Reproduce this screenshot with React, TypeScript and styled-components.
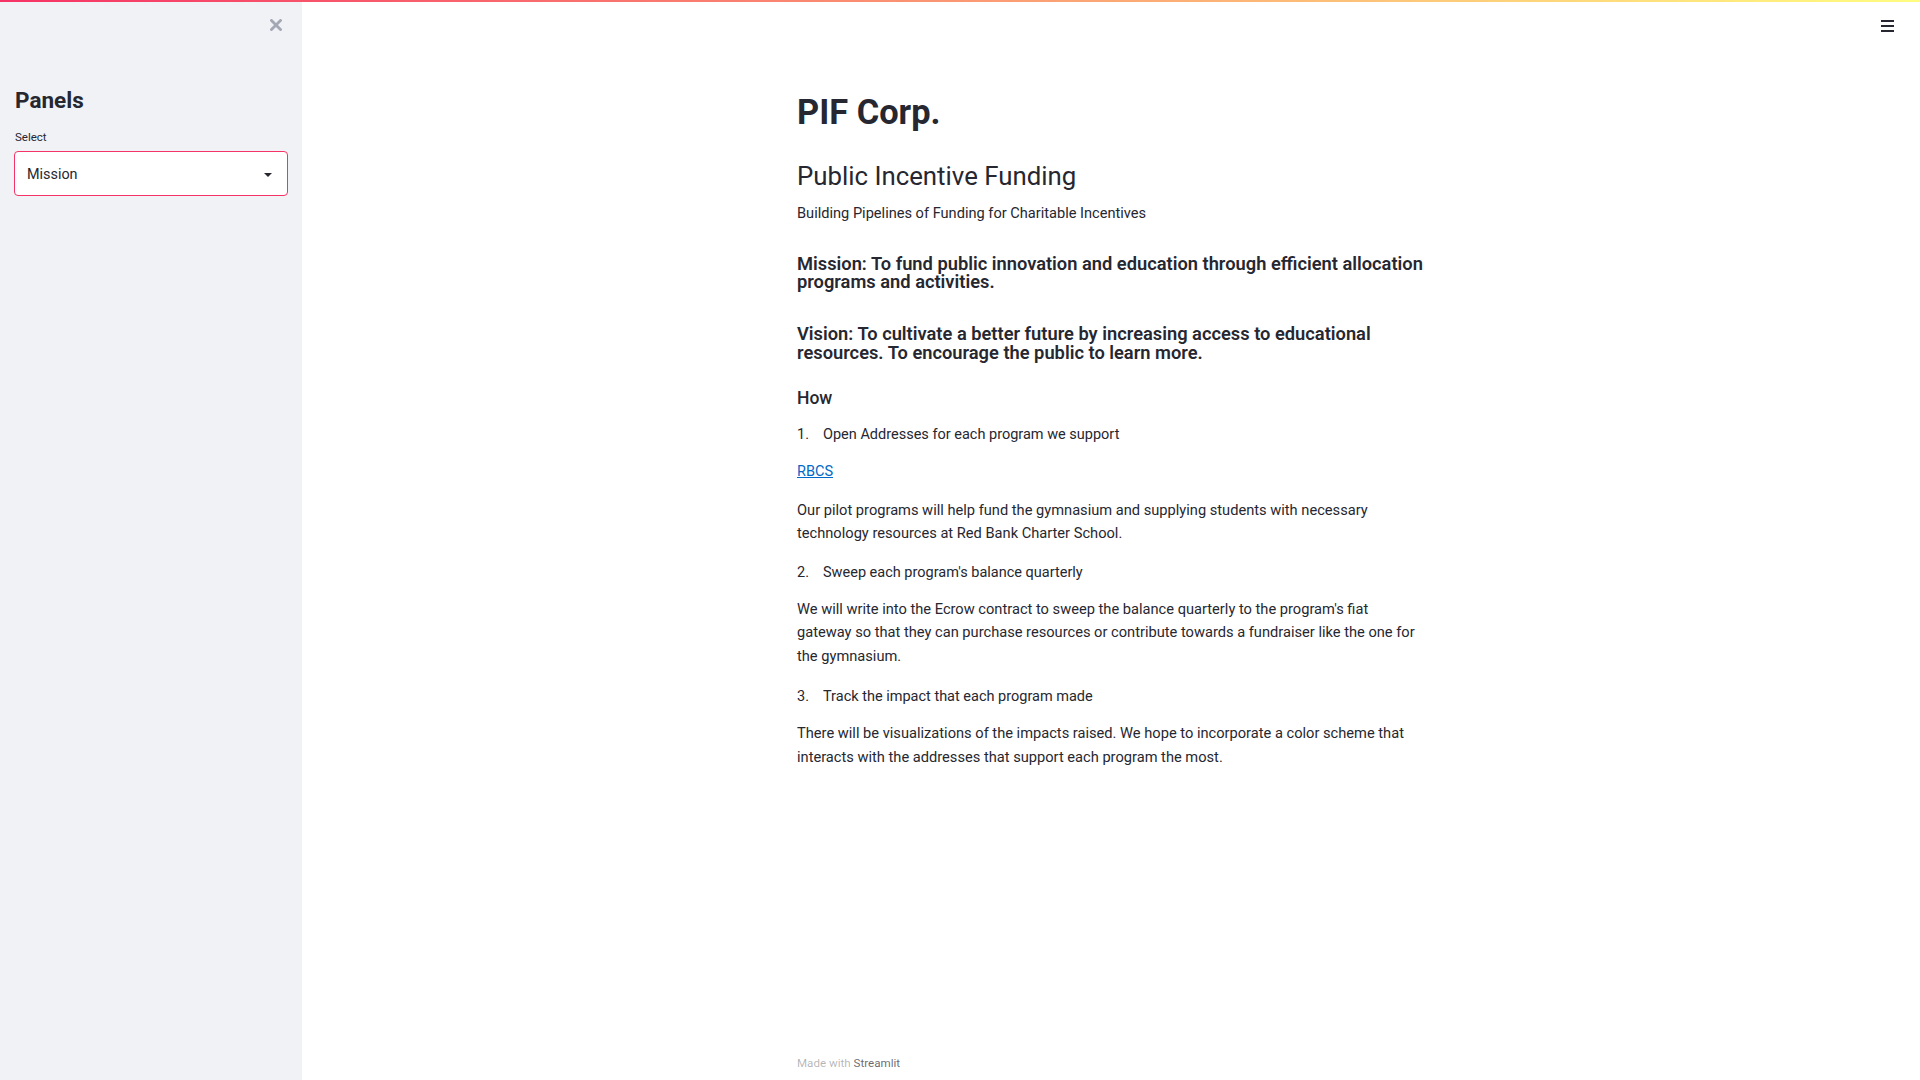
import React from "react";
import styled, { createGlobalStyle } from "styled-components";

const GlobalStyle = createGlobalStyle`
  html, body { margin: 0; padding: 0; background: #ffffff; }
  body {
    font-family: Roboto, "Liberation Sans", sans-serif;
    color: #262730;
    -webkit-font-smoothing: antialiased;
  }
  * { box-sizing: border-box; }
`;

const Page = styled.div`
  display: flex;
  flex-direction: column;
  width: 1920px;
  height: 1080px;
  overflow: hidden;
`;

const Decoration = styled.div`
  height: 2px;
  flex: none;
  background: linear-gradient(90deg, rgb(246, 51, 102), rgb(255, 253, 128));
`;

const Body = styled.div`
  display: flex;
  flex: 1;
  min-height: 0;
`;

const Sidebar = styled.aside`
  width: 302px;
  flex: none;
  background: #f0f2f6;
  padding: 0 14px;
  display: flex;
  flex-direction: column;
`;

const CloseRow = styled.div`
  height: 46px;
  display: flex;
  align-items: center;
  justify-content: flex-end;
  padding-right: 6px;
`;

const CloseButton = styled.button`
  border: none;
  background: transparent;
  padding: 0;
  width: 12px;
  height: 12px;
  display: flex;
  cursor: pointer;
`;

const SidebarTitle = styled.h2`
  margin: 37px 0 0 1px;
  font-size: 22.5px;
  line-height: 30px;
  font-weight: 700;
  color: #262730;
`;

const Label = styled.label`
  display: block;
  margin: 14px 0 0 1px;
  font-size: 11.5px;
  line-height: 16px;
  color: #262730;
`;

const SelectBox = styled.div`
  margin-top: 6px;
  height: 45px;
  background: #ffffff;
  border: 1px solid #f63366;
  border-radius: 4px;
  display: flex;
  align-items: center;
  justify-content: space-between;
  padding: 2px 15px 0 12px;
  font-size: 14.4px;
  color: #262730;
`;

const Caret = styled.span`
  width: 0;
  height: 0;
  border-left: 4px solid transparent;
  border-right: 4px solid transparent;
  border-top: 4px solid #262730;
  margin-top: 1px;
`;

const Main = styled.main`
  flex: 1;
  display: flex;
  flex-direction: column;
  min-width: 0;
`;

const TopBar = styled.header`
  height: 48px;
  flex: none;
  display: flex;
  align-items: center;
  justify-content: flex-end;
  padding-right: 26px;
`;

const MenuButton = styled.button`
  border: none;
  background: transparent;
  padding: 0;
  width: 13px;
  height: 12px;
  display: flex;
  flex-direction: column;
  justify-content: space-between;
  cursor: pointer;
`;

const MenuLine = styled.span`
  display: block;
  height: 1.6px;
  background: #262730;
`;

const Content = styled.div`
  width: 628px;
  margin: 0 auto;
  padding-top: 42px;
`;

const Title = styled.h1`
  margin: 0;
  font-size: 34.4px;
  line-height: 40px;
  font-weight: 700;
  color: #262730;
`;

const Header = styled.h2`
  margin: 25.5px 0 0;
  font-size: 25.8px;
  line-height: 36px;
  font-weight: 400;
  color: #262730;
`;

const Subtitle = styled.p`
  margin: 8.5px 0 0;
  font-size: 14.6px;
  line-height: 22px;
  color: #262730;
`;

const Statement = styled.h3<{ $gap: number }>`
  margin: ${(p) => p.$gap}px 0 0;
  font-size: 18.3px;
  line-height: 18.5px;
  font-weight: 600;
  color: #262730;
`;

const SubHeading = styled.h4`
  margin: 23.5px 0 0;
  font-size: 17.5px;
  line-height: 24px;
  font-weight: 500;
  color: #262730;
`;

const Step = styled.div<{ $gap: number }>`
  display: flex;
  margin-top: ${(p) => p.$gap}px;
  font-size: 14.5px;
  line-height: 23px;
`;

const StepNum = styled.span`
  width: 26px;
  flex: none;
`;

const LinkLine = styled.p`
  margin: 14.5px 0 0;
  font-size: 14.5px;
  line-height: 23px;
`;

const Link = styled.a`
  color: #0068c9;
  text-decoration: underline;
`;

const Para = styled.p<{ $gap: number }>`
  margin: ${(p) => p.$gap}px 0 0;
  font-size: 14.65px;
  line-height: 23.3px;
  color: #262730;
`;

const Footer = styled.footer`
  width: 628px;
  margin: auto auto 0;
  padding-bottom: 8px;
  font-size: 11.6px;
  line-height: 17px;
  color: rgba(38, 39, 48, 0.35);
`;

const FooterBrand = styled.span`
  color: rgba(38, 39, 48, 0.7);
`;

export default function App() {
  return (
    <Page>
      <GlobalStyle />
      <Decoration />
      <Body>
        <Sidebar>
          <CloseRow>
            <CloseButton aria-label="Close sidebar">
              <svg width="12" height="12" viewBox="0 0 12 12">
                <path d="M1.5 1.5 L10.5 10.5 M10.5 1.5 L1.5 10.5" stroke="#a3a8b4" strokeWidth="2.8" strokeLinecap="square" />
              </svg>
            </CloseButton>
          </CloseRow>
          <SidebarTitle>Panels</SidebarTitle>
          <Label>Select</Label>
          <SelectBox>
            <span>Mission</span>
            <Caret />
          </SelectBox>
        </Sidebar>
        <Main>
          <TopBar>
            <MenuButton aria-label="Menu">
              <MenuLine />
              <MenuLine />
              <MenuLine />
            </MenuButton>
          </TopBar>
          <Content>
            <Title>PIF Corp.</Title>
            <Header>Public Incentive Funding</Header>
            <Subtitle>Building Pipelines of Funding for Charitable Incentives</Subtitle>
            <Statement $gap={30.5}>
              Mission: To fund public innovation and education through efficient allocation programs and activities.
            </Statement>
            <Statement $gap={33.5}>
              Vision: To cultivate a better future by increasing access to educational resources. To encourage the public to learn more.
            </Statement>
            <SubHeading>How</SubHeading>
            <Step $gap={13.2}>
              <StepNum>1.</StepNum>
              <span>Open Addresses for each program we support</span>
            </Step>
            <LinkLine>
              <Link href="#">RBCS</Link>
            </LinkLine>
            <Para $gap={15.4}>
              Our pilot programs will help fund the gymnasium and supplying students with necessary technology resources at Red Bank Charter School.
            </Para>
            <Step $gap={16.2}>
              <StepNum>2.</StepNum>
              <span>Sweep each program's balance quarterly</span>
            </Step>
            <Para $gap={13.8}>
              We will write into the Ecrow contract to sweep the balance quarterly to the program's fiat gateway so that they can purchase resources or contribute towards a fundraiser like the one for the gymnasium.
            </Para>
            <Step $gap={16.8}>
              <StepNum>3.</StepNum>
              <span>Track the impact that each program made</span>
            </Step>
            <Para $gap={14.4}>
              There will be visualizations of the impacts raised. We hope to incorporate a color scheme that interacts with the addresses that support each program the most.
            </Para>
          </Content>
          <Footer>
            Made with <FooterBrand>Streamlit</FooterBrand>
          </Footer>
        </Main>
      </Body>
    </Page>
  );
}
